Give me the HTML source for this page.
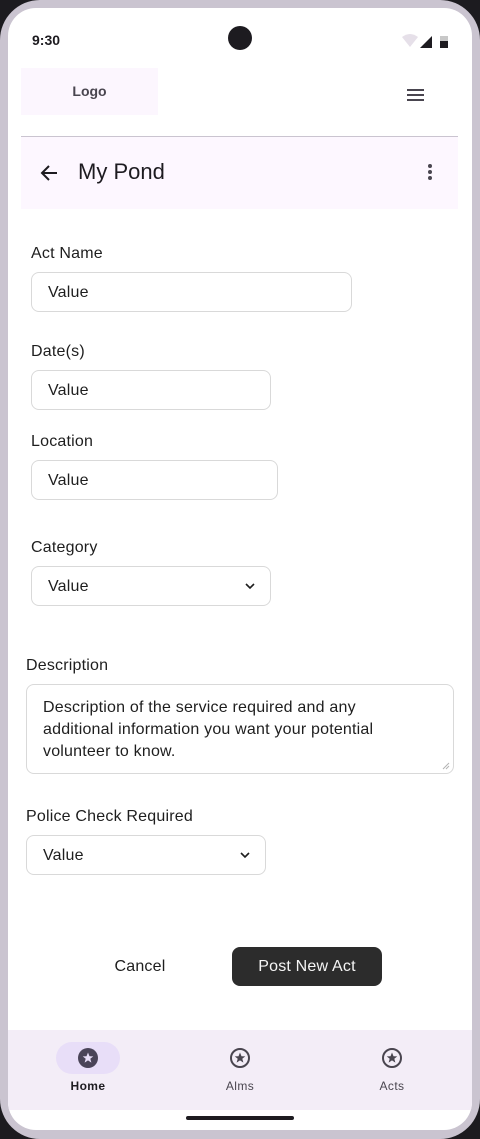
<!DOCTYPE html>
<html><head><meta charset="utf-8"><style>
*{margin:0;padding:0;box-sizing:border-box}
body{width:480px;height:1139px;background:#1c1b1f;font-family:"Liberation Sans",sans-serif;position:relative;overflow:hidden}
.bezel{position:absolute;left:0;top:0;width:480px;height:1139px;background:#cac4d0;border-radius:40px}
.screen{position:absolute;left:8px;top:8px;width:464px;height:1122px;background:#fff;border-radius:28px;overflow:hidden}
.a{position:absolute}
.lbl{position:absolute;font-size:16px;color:#1e1e1e;line-height:20px;top:0;letter-spacing:0.2px}
.inp{position:absolute;border:1px solid #d9d9d9;border-radius:8px;background:#fff;font-size:16px;color:#1e1e1e;padding-left:16px;line-height:39px;letter-spacing:0.2px}
.chev{position:absolute;top:14px}
</style></head><body>
<div class="bezel"></div>
<div class="screen">
<div class="a" style="left:24px;top:24px;font-size:14px;font-weight:bold;color:#1d1b20">9:30</div>
<div class="a" style="left:220px;top:18px;width:24px;height:24px;border-radius:50%;background:#1d1b20"></div>
<svg class="a" style="left:392px;top:26px" width="48" height="16" viewBox="0 0 48 16">
<path d="M2 3 Q10 -3 18 3 L10 13 Z" fill="#e6e0e9"/>
<path d="M20 14 L32 2 L32 14 Z" fill="#1d1b20"/>
<rect x="40" y="2" width="8" height="12" fill="#c8c8c8"/><rect x="40" y="7" width="8" height="7" fill="#1d1b20"/>
</svg>
<div class="a" style="left:13px;top:60px;width:137px;height:47px;background:#fcf6fe;font-size:14px;font-weight:bold;color:#49454f;text-align:center;line-height:47px">Logo</div>
<svg class="a" style="left:398px;top:80px" width="20" height="14"><path d="M1 2H18M1 7H18M1 12H18" stroke="#49454f" stroke-width="2"/></svg>
<div class="a" style="left:13px;top:128px;width:437px;height:1px;background:#cac4d0"></div>
<div class="a" style="left:13px;top:129px;width:437px;height:72px;background:#fdf7ff"></div>
<svg class="a" style="left:31px;top:155px" width="20" height="20" viewBox="0 0 20 20"><path d="M18 10H3M10 3L3 10L10 17" stroke="#1d1b20" stroke-width="2" fill="none"/></svg>
<div class="a" style="left:70px;top:150px;font-size:22px;color:#1d1b20;line-height:28px">My Pond</div>
<svg class="a" style="left:418px;top:155px" width="8" height="20"><circle cx="4" cy="3" r="2" fill="#49454f"/><circle cx="4" cy="9" r="2" fill="#49454f"/><circle cx="4" cy="15" r="2" fill="#49454f"/></svg>

<div class="lbl" style="left:23px;top:236px">Act Name</div>
<div class="inp" style="left:23px;top:264px;width:321px;height:40px">Value</div>
<div class="lbl" style="left:23px;top:334px">Date(s)</div>
<div class="inp" style="left:23px;top:362px;width:240px;height:40px">Value</div>
<div class="lbl" style="left:23px;top:424px">Location</div>
<div class="inp" style="left:23px;top:452px;width:247px;height:40px">Value</div>
<div class="lbl" style="left:23px;top:530px">Category</div>
<div class="inp" style="left:23px;top:558px;width:240px;height:40px">Value
<svg class="chev" style="left:212px" width="12" height="10"><path d="M2 3L6 7L10 3" stroke="#1e1e1e" stroke-width="1.6" fill="none"/></svg></div>
<div class="lbl" style="left:18px;top:648px">Description</div>
<div class="inp" style="left:18px;top:676px;width:428px;height:90px;line-height:22px;padding-top:12px;padding-right:12px">Description of the service required and any<br>additional information you want your potential<br>volunteer to know.
<svg class="a" style="right:3px;bottom:3px" width="8" height="8"><path d="M7 1L1 7M7 4L4 7" stroke="#b3b3b3" stroke-width="1"/></svg></div>
<div class="lbl" style="left:18px;top:799px">Police Check Required</div>
<div class="inp" style="left:18px;top:827px;width:240px;height:40px">Value
<svg class="chev" style="left:212px" width="12" height="10"><path d="M2 3L6 7L10 3" stroke="#1e1e1e" stroke-width="1.6" fill="none"/></svg></div>

<div class="a" style="left:82px;top:949px;width:100px;text-align:center;font-size:16px;color:#1e1e1e;line-height:20px;letter-spacing:0.2px">Cancel</div>
<div class="a" style="left:224px;top:939px;width:150px;height:39px;background:#2c2c2c;border-radius:8px;color:#f5f5f5;font-size:16px;text-align:center;line-height:40px;letter-spacing:0.2px">Post New Act</div>

<div class="a" style="left:0;top:1022px;width:464px;height:80px;background:#f3edf7"></div>
<div class="a" style="left:48px;top:1034px;width:64px;height:32px;border-radius:16px;background:#e8def8"></div>
<svg class="a" style="left:70px;top:1040px" width="20" height="20" viewBox="0 0 20 20"><circle cx="10" cy="10" r="10" fill="#4a4458"/><path d="M10 4.5L11.5 8.3L15.3 8.4L12.3 10.8L13.4 14.6L10 12.4L6.6 14.6L7.7 10.8L4.7 8.4L8.5 8.3Z" fill="#e8def8"/></svg>
<svg class="a" style="left:222px;top:1040px" width="20" height="20" viewBox="0 0 20 20"><circle cx="10" cy="10" r="9" fill="none" stroke="#49454f" stroke-width="2"/><path d="M10 4.5L11.5 8.3L15.3 8.4L12.3 10.8L13.4 14.6L10 12.4L6.6 14.6L7.7 10.8L4.7 8.4L8.5 8.3Z" fill="#49454f"/></svg>
<svg class="a" style="left:374px;top:1040px" width="20" height="20" viewBox="0 0 20 20"><circle cx="10" cy="10" r="9" fill="none" stroke="#49454f" stroke-width="2"/><path d="M10 4.5L11.5 8.3L15.3 8.4L12.3 10.8L13.4 14.6L10 12.4L6.6 14.6L7.7 10.8L4.7 8.4L8.5 8.3Z" fill="#49454f"/></svg>
<div class="a" style="left:40px;top:1071px;width:80px;text-align:center;font-size:12px;font-weight:bold;color:#1d1b20;letter-spacing:0.4px">Home</div>
<div class="a" style="left:192px;top:1071px;width:80px;text-align:center;font-size:12px;color:#49454f;letter-spacing:0.4px">Alms</div>
<div class="a" style="left:344px;top:1071px;width:80px;text-align:center;font-size:12px;color:#49454f;letter-spacing:0.4px">Acts</div>
<div class="a" style="left:178px;top:1108px;width:108px;height:4px;border-radius:2px;background:#1d1b20"></div>
</div>
</body></html>
